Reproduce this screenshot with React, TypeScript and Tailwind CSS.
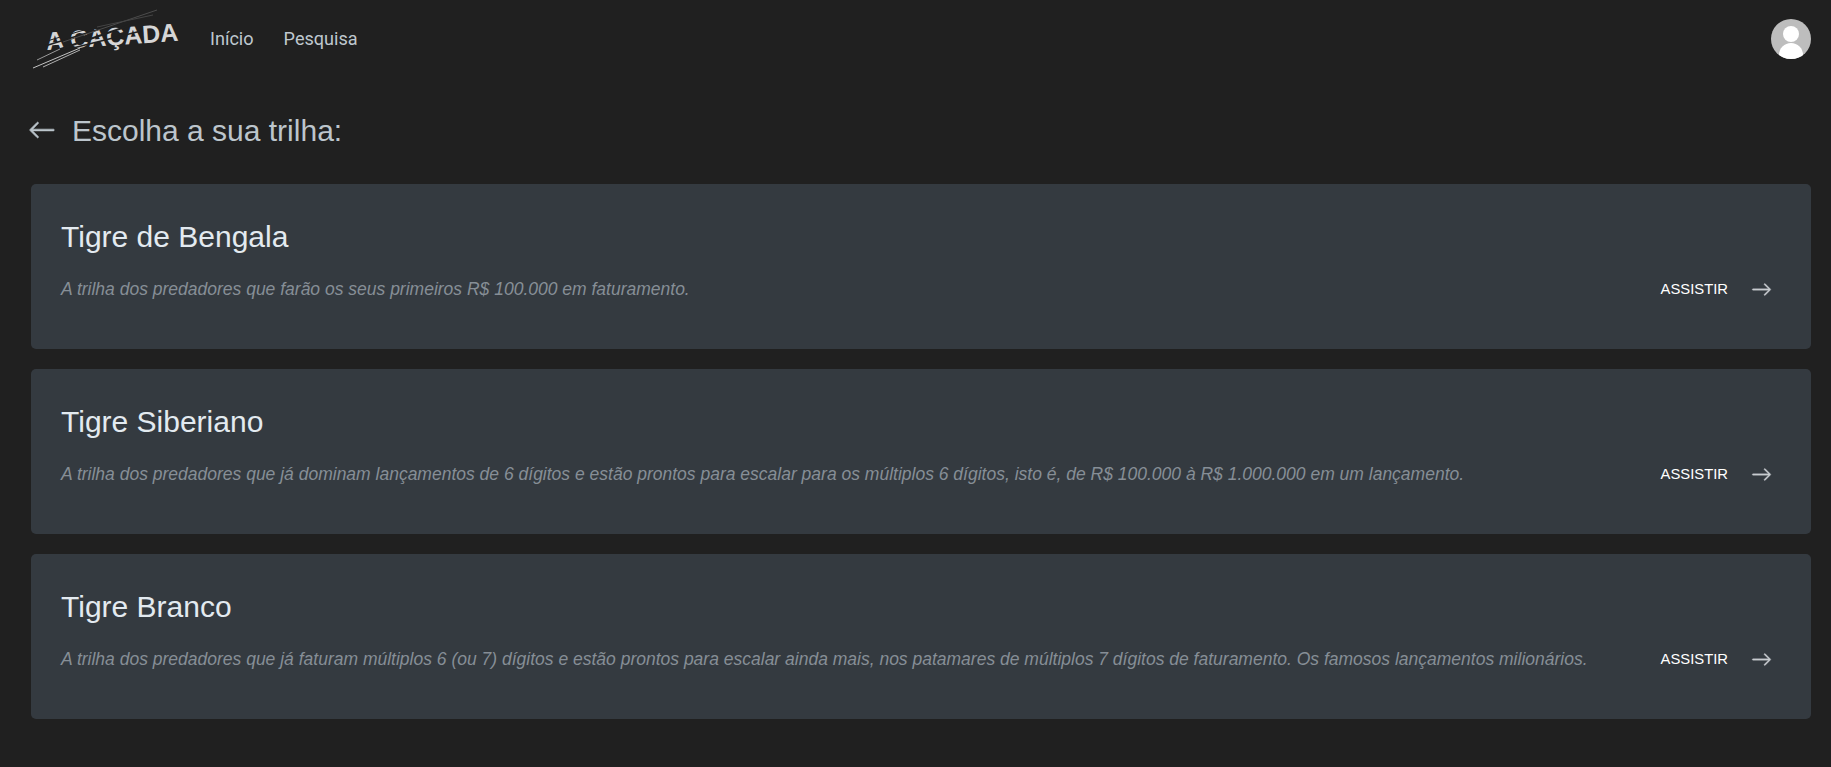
import { BsArrowLeft, BsArrowRight } from "react-icons/bs";

const trails = [
  {
    title: "Tigre de Bengala",
    text: "A trilha dos predadores que farão os seus primeiros R$ 100.000 em faturamento.",
  },
  {
    title: "Tigre Siberiano",
    text: "A trilha dos predadores que já dominam lançamentos de 6 dígitos e estão prontos para escalar para os múltiplos 6 dígitos, isto é, de R$ 100.000 à R$ 1.000.000 em um lançamento.",
  },
  {
    title: "Tigre Branco",
    text: "A trilha dos predadores que já faturam múltiplos 6 (ou 7) dígitos e estão prontos para escalar ainda mais, nos patamares de múltiplos 7 dígitos de faturamento. Os famosos lançamentos milionários.",
  },
];

function Logo() {
  return (
    <div className="relative h-[60px] w-[150px]">
      <span className="absolute left-[15px] top-[17px] origin-left -rotate-[4deg] whitespace-nowrap font-['Liberation_Sans',sans-serif] text-[25px] leading-[30px] font-bold text-[#d6d6d6]">
        A CAÇADA
      </span>
      <svg className="absolute left-0 top-0" width="150" height="60" viewBox="0 0 150 60" fill="none">
        <path d="M14 37 L104 9" stroke="#202020" strokeWidth="1.6" />
        <path d="M16 32 L90 10" stroke="#202020" strokeWidth="1" />
        <path d="M18 44 L100 16" stroke="#202020" strokeWidth="2" />
        <path d="M30 42 L110 22" stroke="#202020" strokeWidth="1.4" />
        <path d="M2 59 L49 39" stroke="#c4c4c4" strokeWidth="1" />
        <path d="M12 58 L49 41" stroke="#b0b0b0" strokeWidth="1" />
        <path d="M6 51 L29 40" stroke="#999999" strokeWidth="1" />
        <path d="M32 33 L126 1" stroke="#4c4c4c" strokeWidth="1" />
        <path d="M66 18 L122 6" stroke="#444444" strokeWidth="1" />
      </svg>
    </div>
  );
}

export default function App() {
  return (
    <div className="min-h-[767px] bg-[#202020] pl-[31px] pr-[20px] font-['Liberation_Sans',sans-serif]">
      <header className="flex h-[77px] items-center justify-between">
        <div className="flex items-center">
          <Logo />
          <nav className="ml-[29px] flex gap-[30px] font-['Roboto',sans-serif] text-[18.1px] text-[#bfc8cf]">
            <a>Início</a>
            <a>Pesquisa</a>
          </nav>
        </div>
        <div className="relative h-10 w-10 overflow-hidden rounded-full bg-[#bdbdbd]">
          <div className="absolute left-[12px] top-[7px] h-4 w-4 rounded-full bg-white" />
          <div className="absolute left-[8px] top-[24px] h-6 w-6 rounded-[50%] bg-white" />
        </div>
      </header>

      <div className="flex h-[107px] items-center pb-[1px]">
        <BsArrowLeft className="-ml-[3px] mr-[16px] text-[#bcc5cc]" size={28} stroke="currentColor" strokeWidth={0.35} />
        <h1 className="text-[30px] font-normal text-[#bcc5cc]">Escolha a sua trilha:</h1>
      </div>

      <div className="flex flex-col gap-5">
        {trails.map((trail) => (
          <div className="flex h-[165px] flex-col rounded-[5px] bg-[#343a40] pl-[30px] pr-[39px] pt-[34px]" key={trail.title}>
            <h3 className="text-[30px] leading-[38px] font-normal text-[#e3eaf0]">{trail.title}</h3>
            <div className="mt-[20px] flex items-center justify-between">
              <p className="text-[17.5px] italic text-[#868e96]">{trail.text}</p>
              <div className="flex items-center text-[14.8px] text-white">
                ASSISTIR
                <BsArrowRight className="ml-[23px] text-[#c8ccd0]" size={21} stroke="currentColor" strokeWidth={0.3} />
              </div>
            </div>
          </div>
        ))}
      </div>
    </div>
  );
}
